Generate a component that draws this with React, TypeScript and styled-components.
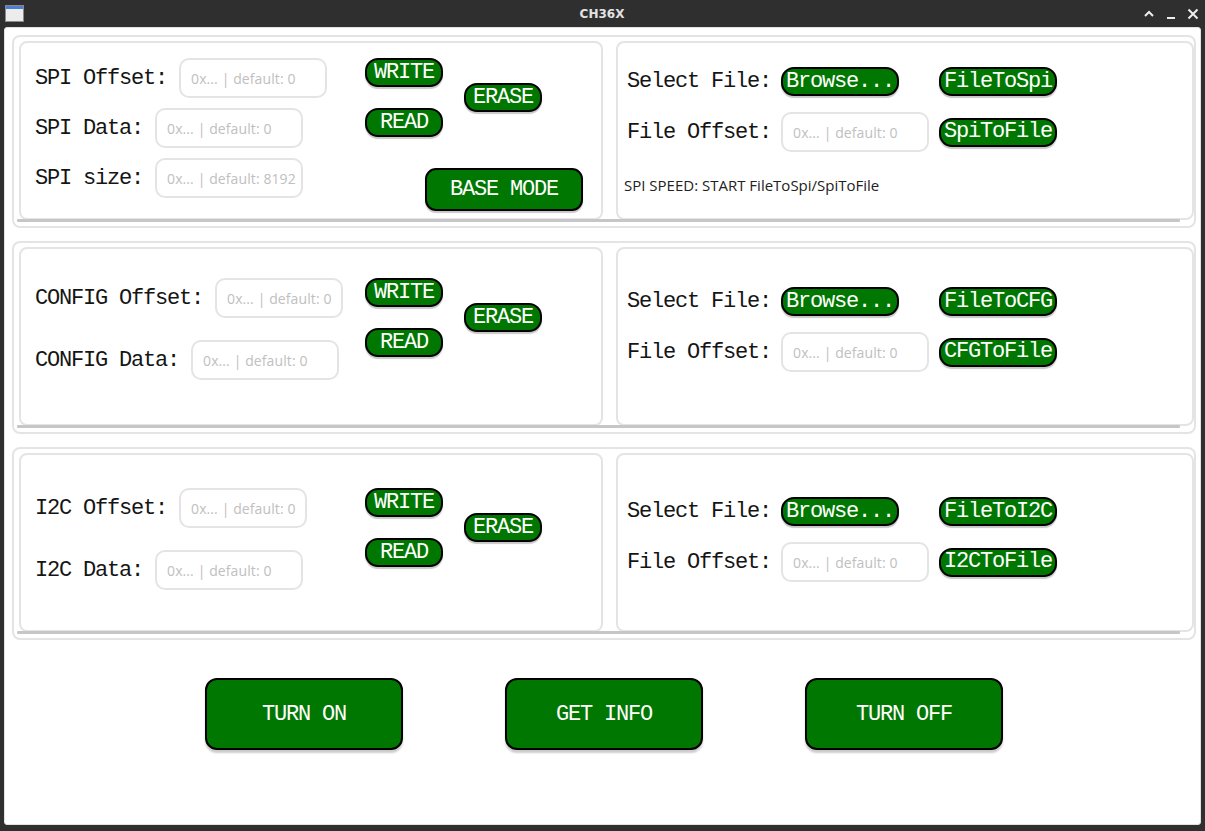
import styled, { createGlobalStyle } from "styled-components";

const GlobalStyle = createGlobalStyle`
  html, body {
    margin: 0;
    padding: 0;
    background: #2f2f2f;
  }
  * {
    box-sizing: border-box;
  }
`;

const GREEN = "#007700";
const LINE = "#e6e3e4";
const MONO = `"Liberation Mono", "DejaVu Sans Mono", monospace`;
const SANS = `"Open Sans", "Noto Sans", sans-serif`;

const Window = styled.div`
  width: 1205px;
  height: 831px;
  display: flex;
  flex-direction: column;
  background: #2f2f2f;
`;

const TitleBar = styled.div`
  height: 27px;
  display: grid;
  grid-template-columns: 1fr auto 1fr;
  align-items: center;
  padding: 0 6px 0 5px;
`;

const Title = styled.div`
  font-family: "DejaVu Sans", sans-serif;
  font-weight: bold;
  font-size: 12px;
  color: #e2e2e2;
`;

const Controls = styled.div`
  display: flex;
  justify-content: flex-end;
  align-items: center;
  gap: 10px;
`;

const Content = styled.div`
  flex: 1;
  margin: 0 4px 6px 4px;
  background: #fff;
  border: 1px solid #e4e1e2;
  border-radius: 3px;
  padding: 7px 4px 0 7px;
  display: flex;
  flex-direction: column;
`;

const Sections = styled.div`
  display: flex;
  flex-direction: column;
  gap: 13px;
`;

const ScrollBox = styled.div`
  position: relative;
  height: 193px;
  border: 2px solid ${LINE};
  border-radius: 8px;
  overflow: hidden;
  padding: 4px 0 0 5px;
  display: flex;
  gap: 13px;
`;

const ScrollThumb = styled.div`
  position: absolute;
  left: 3px;
  right: 14px;
  bottom: 4px;
  height: 3px;
  background: #c6c6c6;
  border-radius: 1px;
`;

const Card = styled.div<{ $padTop: number }>`
  height: 179px;
  border: 2px solid ${LINE};
  border-radius: 8px;
  background: #fff;
  padding-top: ${(p) => p.$padTop}px;
`;

const LeftCard = styled(Card)`
  width: 584px;
  flex-shrink: 0;
  padding-left: 14px;
  display: flex;
  align-items: flex-start;
`;

const RightCard = styled(Card)`
  flex: 1;
  padding-left: 9px;
`;

const FieldColumn = styled.div<{ $gap: number }>`
  width: 330px;
  flex-shrink: 0;
  display: flex;
  flex-direction: column;
  gap: ${(p) => p.$gap}px;
`;

const FieldRow = styled.div`
  display: flex;
  align-items: center;
  gap: 12px;
`;

const Label = styled.span`
  font-family: ${MONO};
  font-size: 22px;
  letter-spacing: -1.2px;
  color: #151515;
  white-space: nowrap;
`;

const Input = styled.input<{ $width?: number }>`
  width: ${(p) => p.$width ?? 148}px;
  height: 40px;
  border: 2px solid ${LINE};
  border-radius: 10px;
  padding: 0 3px 0 10px;
  font-family: ${SANS};
  font-size: 14px;
  letter-spacing: 0.1px;
  color: #333;
  background: #fff;
  outline: none;
  &::placeholder {
    color: #c0c0c0;
  }
`;

const ActionColumn = styled.div`
  width: 218px;
  display: flex;
  flex-direction: column;
`;

const ButtonGrid = styled.div`
  display: grid;
  grid-template-columns: auto auto;
  grid-template-rows: auto auto;
  column-gap: 21px;
  row-gap: 21px;
  justify-content: start;
  align-items: center;
`;

const SmallButton = styled.button<{ $tight?: boolean; $span?: boolean }>`
  height: 29px;
  padding: 0 ${(p) => (p.$tight ? 3 : 7)}px;
  border: 2px solid #000;
  border-radius: 13px;
  background: ${GREEN};
  color: #fff;
  font-family: ${MONO};
  font-size: 22px;
  letter-spacing: -1.2px;
  line-height: 1;
  white-space: nowrap;
  box-shadow: 0 2px 1px rgba(0, 0, 0, 0.22);
  cursor: pointer;
  ${(p) => (p.$span ? "grid-column: 2; grid-row: 1 / 3;" : "")}
`;

const ModeButton = styled(SmallButton)`
  align-self: flex-end;
  margin-top: 31px;
  height: 43px;
  padding: 0 23px;
  border-radius: 11px;
`;

const FileGrid = styled.div`
  display: grid;
  grid-template-columns: auto 148px auto;
  column-gap: 10px;
  row-gap: 16px;
  align-items: center;
  justify-items: start;
  justify-content: start;
`;

const SpeedText = styled.div`
  margin: 23px 0 0 -3px;
  font-family: ${SANS};
  font-size: 15px;
  line-height: 20px;
  color: #222;
`;

const ButtonBar = styled.div`
  margin-top: 38px;
  display: flex;
  justify-content: center;
  gap: 102px;
`;

const BigButton = styled.button`
  width: 198px;
  height: 72px;
  border: 2px solid #000;
  border-radius: 12px;
  background: ${GREEN};
  color: #fff;
  font-family: ${MONO};
  font-size: 22px;
  letter-spacing: -1.2px;
  box-shadow: 0 3px 2px rgba(0, 0, 0, 0.2);
  cursor: pointer;
`;

function WindowIcon() {
  return (
    <svg width="19" height="17" viewBox="0 0 19 17">
      <rect x="0.5" y="0.5" width="18" height="16" fill="#ececec" stroke="#8a8a8a" />
      <rect x="1" y="1" width="17" height="3" fill="#4a7fd4" />
    </svg>
  );
}

function WindowControls() {
  return (
    <Controls>
      <svg width="12" height="12" viewBox="0 0 12 12">
        <polyline points="2,8 6,4 10,8" fill="none" stroke="#eee" strokeWidth="2" />
      </svg>
      <svg width="12" height="12" viewBox="0 0 12 12">
        <line x1="2" y1="10" x2="10" y2="10" stroke="#eee" strokeWidth="2" />
      </svg>
      <svg width="12" height="12" viewBox="0 0 12 12">
        <path d="M1.5 1.5 L10.5 10.5 M10.5 1.5 L1.5 10.5" stroke="#eee" strokeWidth="2" />
      </svg>
    </Controls>
  );
}

type Field = { label: string; placeholder: string; width?: number };

type Section = {
  fields: Field[];
  fieldGap: number;
  leftTop: number;
  rightTop: number;
  baseMode?: boolean;
  toDevice: string;
  toFile: string;
  speed?: string;
};

const sections: Section[] = [
  {
    fields: [
      { label: "SPI Offset:", placeholder: "0x... | default: 0" },
      { label: "SPI Data:", placeholder: "0x... | default: 0" },
      { label: "SPI size:", placeholder: "0x... | default: 8192" },
    ],
    fieldGap: 10,
    leftTop: 15,
    rightTop: 24,
    baseMode: true,
    toDevice: "FileToSpi",
    toFile: "SpiToFile",
    speed: "SPI SPEED: START FileToSpi/SpiToFile",
  },
  {
    fields: [
      { label: "CONFIG Offset:", placeholder: "0x... | default: 0", width: 128 },
      { label: "CONFIG Data:", placeholder: "0x... | default: 0" },
    ],
    fieldGap: 22,
    leftTop: 29,
    rightTop: 38,
    toDevice: "FileToCFG",
    toFile: "CFGToFile",
  },
  {
    fields: [
      { label: "I2C Offset:", placeholder: "0x... | default: 0", width: 128 },
      { label: "I2C Data:", placeholder: "0x... | default: 0" },
    ],
    fieldGap: 22,
    leftTop: 33,
    rightTop: 42,
    toDevice: "FileToI2C",
    toFile: "I2CToFile",
  },
];

function SectionBox({ s }: { s: Section }) {
  return (
    <ScrollBox>
      <LeftCard $padTop={s.leftTop}>
        <FieldColumn $gap={s.fieldGap}>
          {s.fields.map((f) => (
            <FieldRow key={f.label}>
              <Label>{f.label}</Label>
              <Input $width={f.width} placeholder={f.placeholder} />
            </FieldRow>
          ))}
        </FieldColumn>
        <ActionColumn>
          <ButtonGrid>
            <SmallButton>WRITE</SmallButton>
            <SmallButton $span>ERASE</SmallButton>
            <SmallButton>READ</SmallButton>
          </ButtonGrid>
          {s.baseMode && <ModeButton>BASE MODE</ModeButton>}
        </ActionColumn>
      </LeftCard>
      <RightCard $padTop={s.rightTop}>
        <FileGrid>
          <Label>Select File:</Label>
          <SmallButton $tight>Browse...</SmallButton>
          <SmallButton $tight>{s.toDevice}</SmallButton>
          <Label>File Offset:</Label>
          <Input placeholder="0x... | default: 0" />
          <SmallButton $tight>{s.toFile}</SmallButton>
        </FileGrid>
        {s.speed && <SpeedText>{s.speed}</SpeedText>}
      </RightCard>
      <ScrollThumb />
    </ScrollBox>
  );
}

export default function App() {
  return (
    <>
      <GlobalStyle />
      <Window>
        <TitleBar>
          <WindowIcon />
          <Title>CH36X</Title>
          <WindowControls />
        </TitleBar>
        <Content>
          <Sections>
            {sections.map((s) => (
              <SectionBox key={s.toDevice} s={s} />
            ))}
          </Sections>
          <ButtonBar>
            <BigButton>TURN ON</BigButton>
            <BigButton>GET INFO</BigButton>
            <BigButton>TURN OFF</BigButton>
          </ButtonBar>
        </Content>
      </Window>
    </>
  );
}
